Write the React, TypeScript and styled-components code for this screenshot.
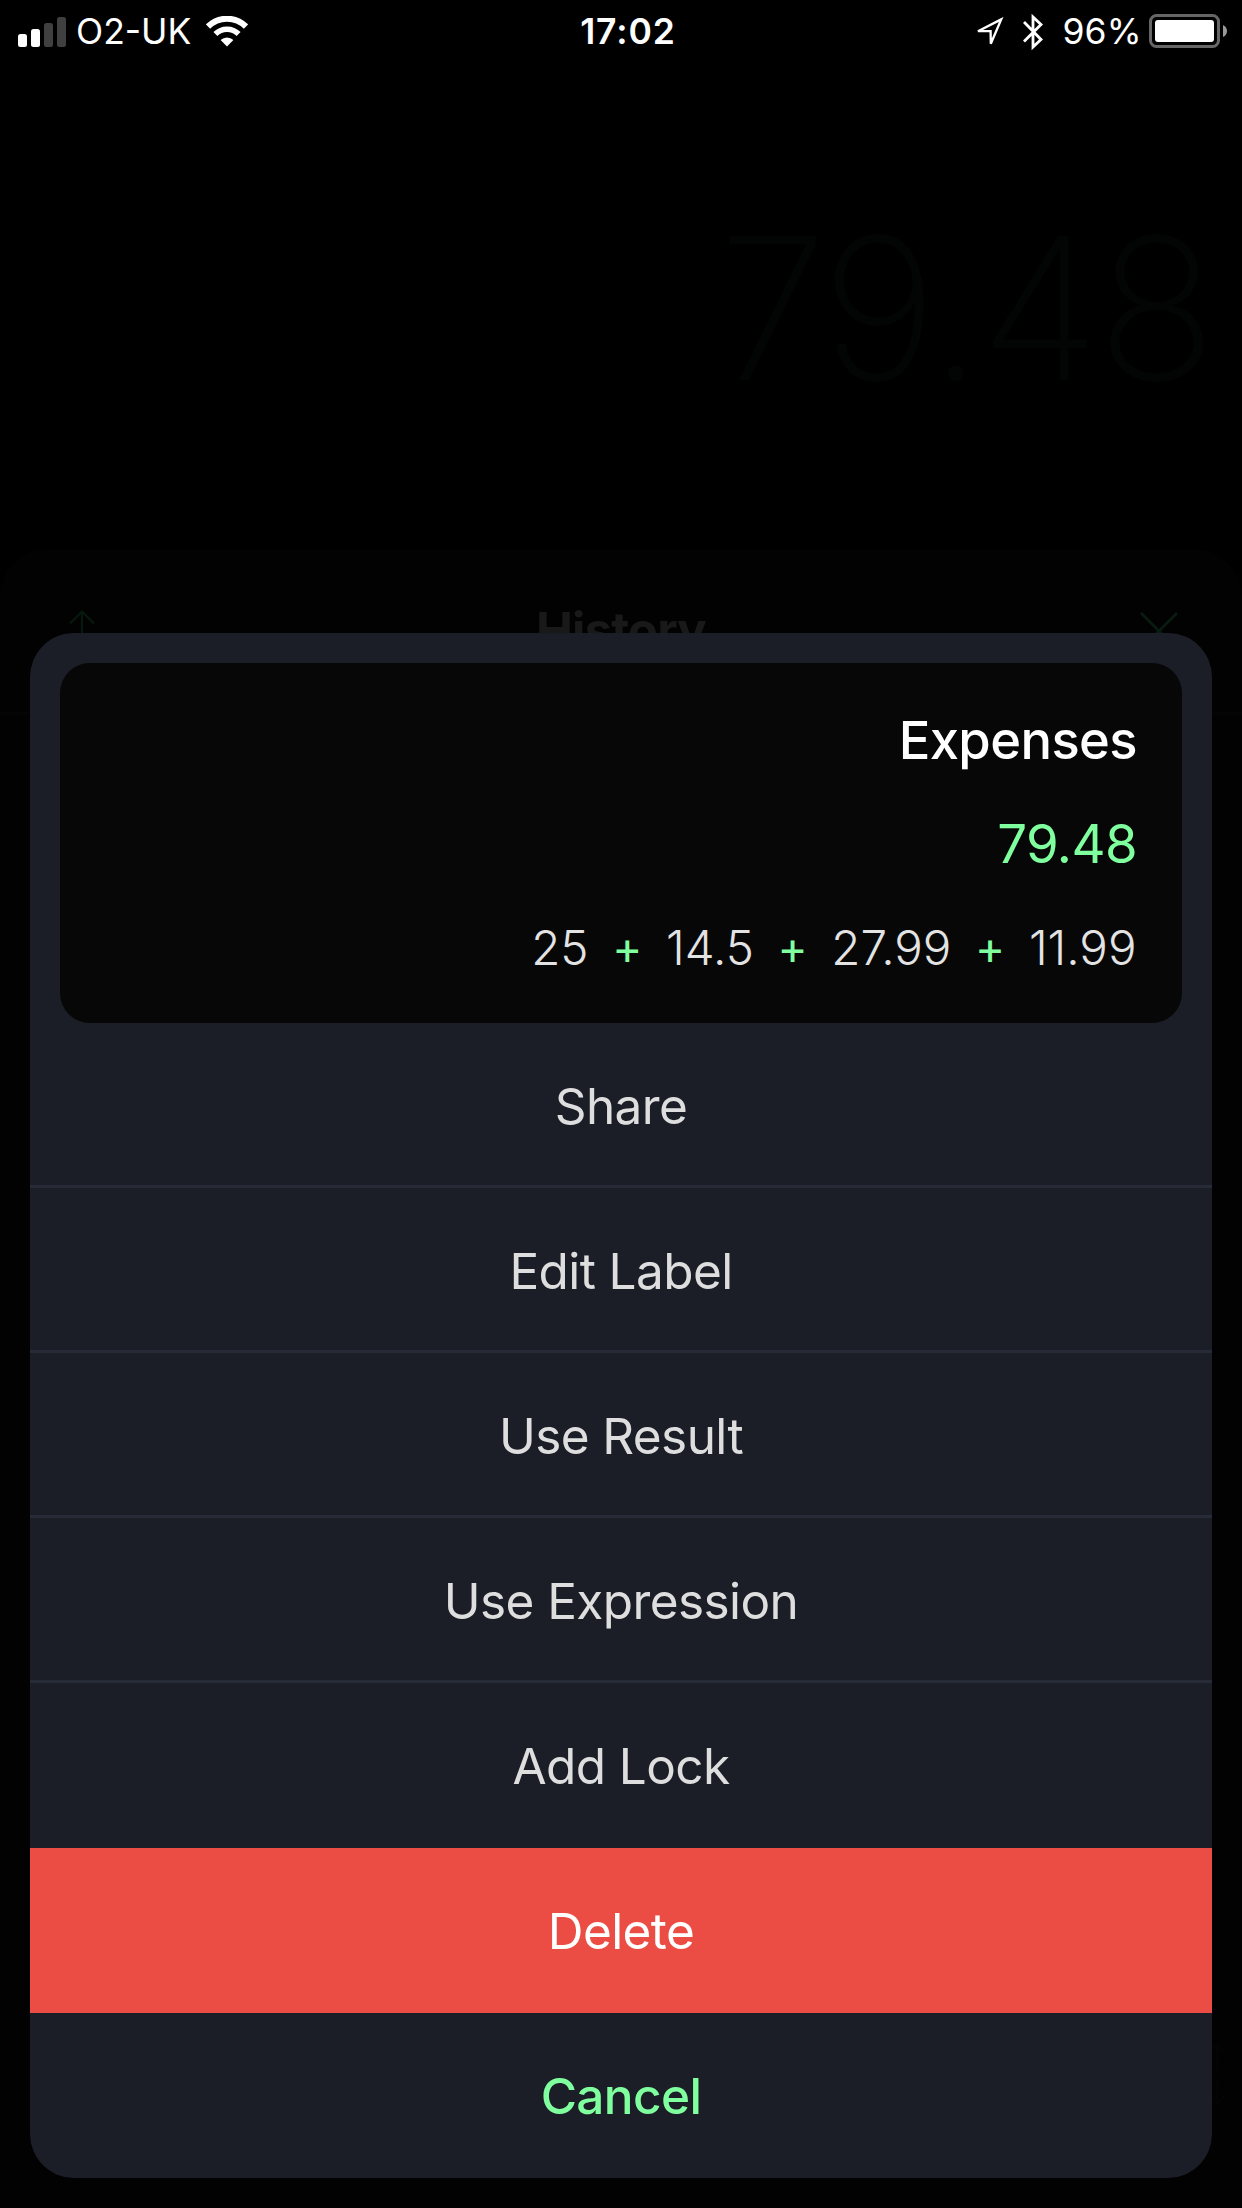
import React from "react";
import styled, { createGlobalStyle } from "styled-components";

const GlobalStyle = createGlobalStyle`
  * { box-sizing: border-box; }
  body { margin: 0; background: #000; }
`;

const Screen = styled.div`
  position: relative;
  width: 1242px;
  height: 2208px;
  overflow: hidden;
  background: #000;
  color: #fff;
  font-family: Inter, "Liberation Sans", sans-serif;
  display: flex;
  flex-direction: column;
`;

const StatusBar = styled.header`
  height: 60px;
  flex: none;
  display: grid;
  grid-template-columns: 1fr auto 1fr;
  align-items: center;
  padding: 2px 15px 0 18px;
`;

const StatusGroup = styled.div<{ $end?: boolean }>`
  display: flex;
  align-items: center;
  justify-content: ${(p) => (p.$end ? "flex-end" : "flex-start")};
`;

const StatusText = styled.span<{ $weight?: number; $spacing?: number; $before?: number; $after?: number }>`
  font-size: 35.5px;
  line-height: 60px;
  font-weight: ${(p) => p.$weight ?? 400};
  letter-spacing: ${(p) => p.$spacing ?? 0}px;
  margin-left: ${(p) => p.$before ?? 0}px;
  margin-right: ${(p) => p.$after ?? 0}px;
`;

const RadioIcons = styled.div`
  display: flex;
  align-items: center;
  gap: 19px;
`;

const Display = styled.div`
  height: 489px;
  flex: none;
  padding: 128px 29px 0 0;
  text-align: right;
  font-size: 198px;
  line-height: 240px;
  font-weight: 170;
  letter-spacing: -3.6px;
  color: #030504;
`;

const HistoryPanel = styled.section`
  flex: 1;
  border-radius: 48px 48px 0 0;
  background: #020202;
`;

const HistoryHeader = styled.div`
  height: 166px;
  padding: 0 63px 0 69px;
  display: flex;
  justify-content: space-between;
  align-items: center;
  border-bottom: 3px solid #040404;
`;

const HistoryTitle = styled.h1`
  margin: 0 0 2px 8px;
  font-size: 49.5px;
  line-height: 60px;
  font-weight: 700;
  letter-spacing: -1px;
  color: #191919;
`;

const Sheet = styled.div`
  position: absolute;
  left: 30px;
  right: 30px;
  bottom: 30px;
  padding-top: 30px;
  border-radius: 44px;
  overflow: hidden;
  background: #1c1e27;
`;

const Card = styled.div`
  height: 360px;
  margin: 0 30px;
  padding: 26px 45px 0 0;
  border-radius: 30px;
  background: #070707;
  display: flex;
  flex-direction: column;
  align-items: flex-end;
`;

const CardLabel = styled.div`
  font-size: 52.5px;
  line-height: 103px;
  font-weight: 500;
  letter-spacing: -0.6px;
`;

const CardResult = styled.div`
  font-size: 52.8px;
  line-height: 104px;
  letter-spacing: -0.6px;
  color: #80ff9f;
`;

const Expression = styled.div`
  display: flex;
  gap: 23.7px;
  padding-right: 0.5px;
  font-size: 47.5px;
  line-height: 104px;
  font-weight: 300;
  color: #e3e3e3;
`;

const Operator = styled.span`
  color: #80ff9f;
  font-weight: 400;
  font-size: 45.5px;
`;

const Action = styled.button<{ $kind?: "danger" | "cancel"; $line?: boolean }>`
  display: flex;
  align-items: center;
  justify-content: center;
  width: 100%;
  height: 165px;
  margin: 0;
  padding: 1px 0 0;
  border: 0;
  box-shadow: ${(p) => (p.$line ? "inset 0 -3px #272a37" : "none")};
  font: inherit;
  font-size: 49.5px;
  letter-spacing: -0.6px;
  font-weight: ${(p) => (p.$kind === "cancel" ? 500 : 400)};
  color: ${(p) => (p.$kind === "cancel" ? "#80ff9f" : p.$kind === "danger" ? "#fff" : "#dededf")};
  background: ${(p) => (p.$kind === "danger" ? "#eb4d44" : "transparent")};
`;

const ScrollMark = styled.svg`
  position: absolute;
  right: 14px;
  top: 2040px;
`;

const Signal = () => (
  <svg width="48" height="32" viewBox="0 0 48 32">
    <rect x="0" y="18" width="9" height="13" rx="2.5" fill="#fff" />
    <rect x="13" y="13" width="9" height="18" rx="2.5" fill="#fff" />
    <rect x="26" y="7" width="9" height="24" rx="2.5" fill="#404040" />
    <rect x="39" y="1" width="9" height="30" rx="2.5" fill="#404040" />
  </svg>
);

const Wifi = () => (
  <svg width="42" height="32" viewBox="0 0 42 32" fill="none" stroke="#fff">
    <path d="M2 10.6a26.8 26.8 0 0 1 38 0" strokeWidth="6" />
    <path d="M9.4 18a16.4 16.4 0 0 1 23.2 0" strokeWidth="5.6" />
    <path d="M21 30.5l-6.4-6.4a9.2 9.2 0 0 1 12.8 0z" fill="#fff" stroke="none" />
  </svg>
);

const Location = () => (
  <svg width="30" height="30" viewBox="0 0 30 30">
    <path d="M27.2 2.4L4 14.2h12.6l.2 12.6z" fill="none" stroke="#fff" strokeWidth="2.3" />
  </svg>
);

const Bluetooth = () => (
  <svg width="22" height="38" viewBox="0 0 22 38">
    <path d="M1 9l17 17.5-8 7.5V4l8 7.5L1 28.5" fill="none" stroke="#fff" strokeWidth="2.8" />
  </svg>
);

const Battery = () => (
  <svg width="78" height="36" viewBox="0 0 78 36">
    <rect x="1.5" y="1.5" width="68" height="31" rx="6" fill="none" stroke="#666" strokeWidth="3" />
    <rect x="6" y="6" width="59" height="22" rx="3" fill="#fff" />
    <path d="M74 11q4 2 4 6t-4 6z" fill="#999" />
  </svg>
);

const UpArrow = () => (
  <svg width="26" height="42" viewBox="0 0 26 42" fill="none" stroke="#07190f" strokeWidth="2.2">
    <path d="M13 1.5V41M1 13.5l12-12 12 12" />
  </svg>
);

const Close = () => (
  <svg width="40" height="40" viewBox="0 0 40 40" fill="none" stroke="#081c11" strokeWidth="2.6">
    <path d="M2 2l36 36M38 2L2 38" />
  </svg>
);

const terms = ["25", "14.5", "27.99", "11.99"];
const actions = ["Share", "Edit Label", "Use Result", "Use Expression", "Add Lock"];

export default function App() {
  return (
    <Screen>
      <GlobalStyle />
      <StatusBar>
        <StatusGroup>
          <Signal />
          <StatusText $before={10} $after={15}>O2-UK</StatusText>
          <Wifi />
        </StatusGroup>
        <StatusText $weight={600} $spacing={0.9} $before={11}>17:02</StatusText>
        <StatusGroup $end>
          <RadioIcons>
            <Location />
            <Bluetooth />
          </RadioIcons>
          <StatusText $before={17.5} $after={7.5}>96%</StatusText>
          <Battery />
        </StatusGroup>
      </StatusBar>
      <Display>79.48</Display>
      <HistoryPanel>
        <HistoryHeader>
          <UpArrow />
          <HistoryTitle>History</HistoryTitle>
          <Close />
        </HistoryHeader>
      </HistoryPanel>
      <ScrollMark width="30" height="68" viewBox="0 0 30 68" fill="none" stroke="#040404" strokeWidth="3">
        <path d="M19 4v26M11 13l8-9 8 9M19 38v26M11 55l8 9 8-9" />
      </ScrollMark>
      <Sheet>
        <Card>
          <CardLabel>Expenses</CardLabel>
          <CardResult>79.48</CardResult>
          <Expression>
            {terms.map((term, i) => (
              <React.Fragment key={term}>
                {i > 0 && <Operator>+</Operator>}
                <span>{term}</span>
              </React.Fragment>
            ))}
          </Expression>
        </Card>
        {actions.map((label, i) => (
          <Action key={label} $line={i < actions.length - 1}>{label}</Action>
        ))}
        <Action $kind="danger">Delete</Action>
        <Action $kind="cancel">Cancel</Action>
      </Sheet>
    </Screen>
  );
}
